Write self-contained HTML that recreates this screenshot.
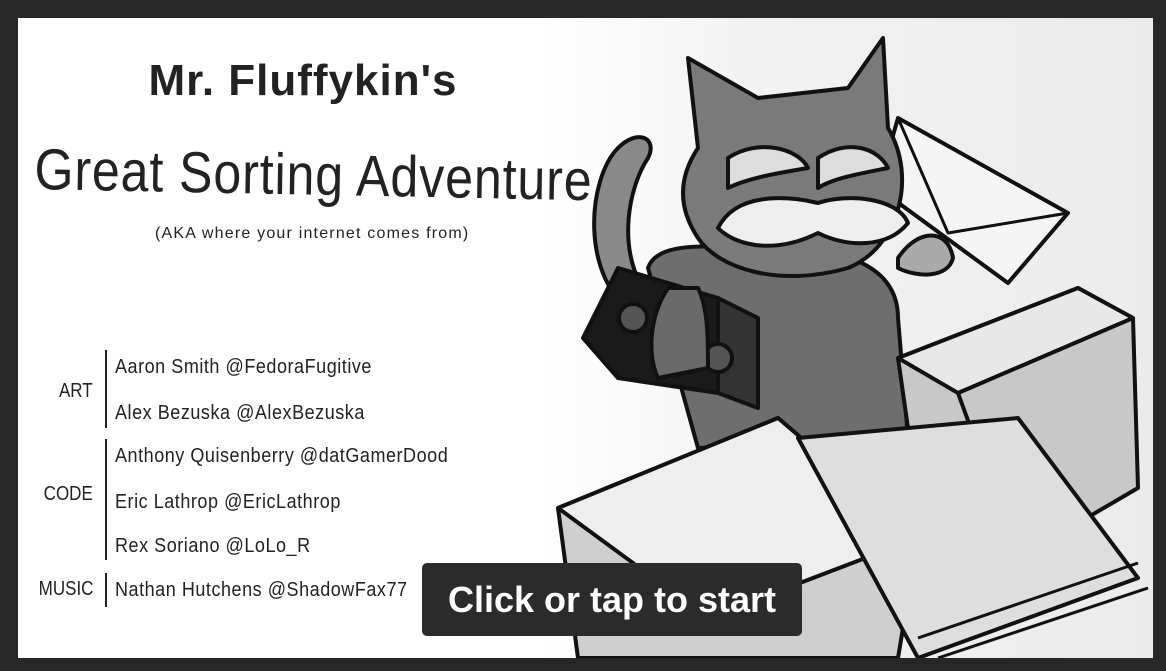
<!DOCTYPE html>
<html><head><meta charset="utf-8"><style>
html,body{margin:0;padding:0;background:#272727;width:1166px;height:671px;overflow:hidden}
#c{position:absolute;left:18px;top:18px;width:1135px;height:640px;background:#fff;overflow:hidden}
.t{position:absolute;font-family:"Liberation Sans Narrow","Liberation Sans",sans-serif;color:#222;white-space:nowrap}
.n{transform-origin:0 0;transform:scaleX(0.9);font-size:20px;letter-spacing:0.6px}
.bar{position:absolute;left:87px;width:2px;background:#222}
</style></head><body>
<div id="c">
<svg width="1135" height="640" style="position:absolute;left:0;top:0">
<defs><linearGradient id="g" x1="0" x2="1"><stop offset="0" stop-color="#fff"/><stop offset="0.35" stop-color="#f2f2f2"/><stop offset="1" stop-color="#ebebeb"/></linearGradient></defs>
<rect x="520" y="0" width="615" height="640" fill="url(#g)"/>
<g stroke="#111" stroke-width="4" stroke-linejoin="round">
<path d="M620 300 C560 260 570 160 600 130 C620 110 640 120 630 140 C610 170 600 230 625 270" fill="#8a8a8a"/>
<path d="M880 100 L1050 195 L990 265 L860 170 Z" fill="#f5f5f5"/>
<path d="M880 100 L930 215 L1050 195" fill="none" stroke-width="3"/>
<path d="M630 250 C640 220 700 230 760 230 C830 230 880 250 880 300 L890 420 L680 430 Z" fill="#6e6e6e"/>
<path d="M680 130 L670 40 L740 80 L830 70 L865 20 L870 110 C900 160 880 230 830 250 C760 270 700 250 680 220 C660 190 660 160 680 130 Z" fill="#7a7a7a"/>
<path d="M710 140 C740 120 780 130 790 150 C760 155 730 160 710 170 Z" fill="#ddd"/>
<path d="M800 140 C830 120 860 130 870 150 C845 155 815 160 800 170 Z" fill="#ddd"/>
<path d="M700 210 C720 170 780 180 800 185 C830 175 880 180 890 205 C870 230 830 230 800 215 C760 235 720 230 700 210 Z" fill="#eee"/>
<path d="M880 240 C900 210 930 210 935 240 C930 260 900 260 880 250 Z" fill="#aaa"/>
<path d="M565 320 L600 250 L700 280 L700 375 L600 360 Z" fill="#1a1a1a"/>
<path d="M700 280 L740 300 L740 390 L700 375 Z" fill="#333"/>
<circle cx="615" cy="300" r="14" fill="#555"/>
<circle cx="700" cy="340" r="14" fill="#555"/>
<path d="M650 270 C630 300 630 340 640 360 L690 350 C690 320 690 290 680 270 Z" fill="#6a6a6a"/>
<path d="M880 340 L1060 270 L1115 300 L1120 470 L1000 540 L900 480 Z" fill="#c8c8c8"/>
<path d="M880 340 L1060 270 L1115 300 L940 375 Z" fill="#e8e8e8"/>
<path d="M940 375 L1000 540" fill="none"/>
<path d="M540 490 L760 400 L900 520 L880 640 L560 640 Z" fill="#cfcfcf"/>
<path d="M540 490 L760 400 L900 520 L690 600 Z" fill="#eeeeee"/>
<path d="M780 420 L1000 400 L1120 560 L900 640 Z" fill="#dedede"/>
<path d="M900 620 L1120 545 M920 640 L1130 570" fill="none" stroke-width="3"/>
</g>
</svg>
<div class="t" style="left:0;width:570px;text-align:center;top:38px;font-size:44px;font-weight:bold;letter-spacing:1px">Mr. Fluffykin's</div>
<div class="t" style="left:17px;top:118px;font-size:58px;letter-spacing:1px;transform-origin:0 0;transform:scaleX(0.865) rotate(1deg)">Great Sorting Adventure</div>
<div class="t" style="left:137px;top:207px;font-size:16px;letter-spacing:1.2px">(AKA where your internet comes from)</div>
<div class="bar" style="top:332px;height:78px"></div>
<div class="bar" style="top:421px;height:121px"></div>
<div class="bar" style="top:555px;height:34px"></div>
<div class="t" style="right:1060px;top:362px;font-size:20px;transform:scaleX(0.85);transform-origin:100% 0">ART</div>
<div class="t" style="right:1060px;top:465px;font-size:20px;transform:scaleX(0.85);transform-origin:100% 0">CODE</div>
<div class="t" style="right:1060px;top:560px;font-size:20px;transform:scaleX(0.85);transform-origin:100% 0">MUSIC</div>
<div class="t n" style="left:97px;top:338px">Aaron Smith @FedoraFugitive</div>
<div class="t n" style="left:97px;top:384px">Alex Bezuska @AlexBezuska</div>
<div class="t n" style="left:97px;top:427px">Anthony Quisenberry @datGamerDood</div>
<div class="t n" style="left:97px;top:473px">Eric Lathrop @EricLathrop</div>
<div class="t n" style="left:97px;top:517px">Rex Soriano @LoLo_R</div>
<div class="t n" style="left:97px;top:561px">Nathan Hutchens @ShadowFax77</div>
<div style="position:absolute;left:404px;top:545px;width:380px;height:73px;background:#2b2b2b;border-radius:5px;color:#fff;font-family:'Liberation Sans',sans-serif;font-weight:bold;font-size:36px;text-align:center;line-height:73px">Click or tap to start</div>
</div>
</body></html>
